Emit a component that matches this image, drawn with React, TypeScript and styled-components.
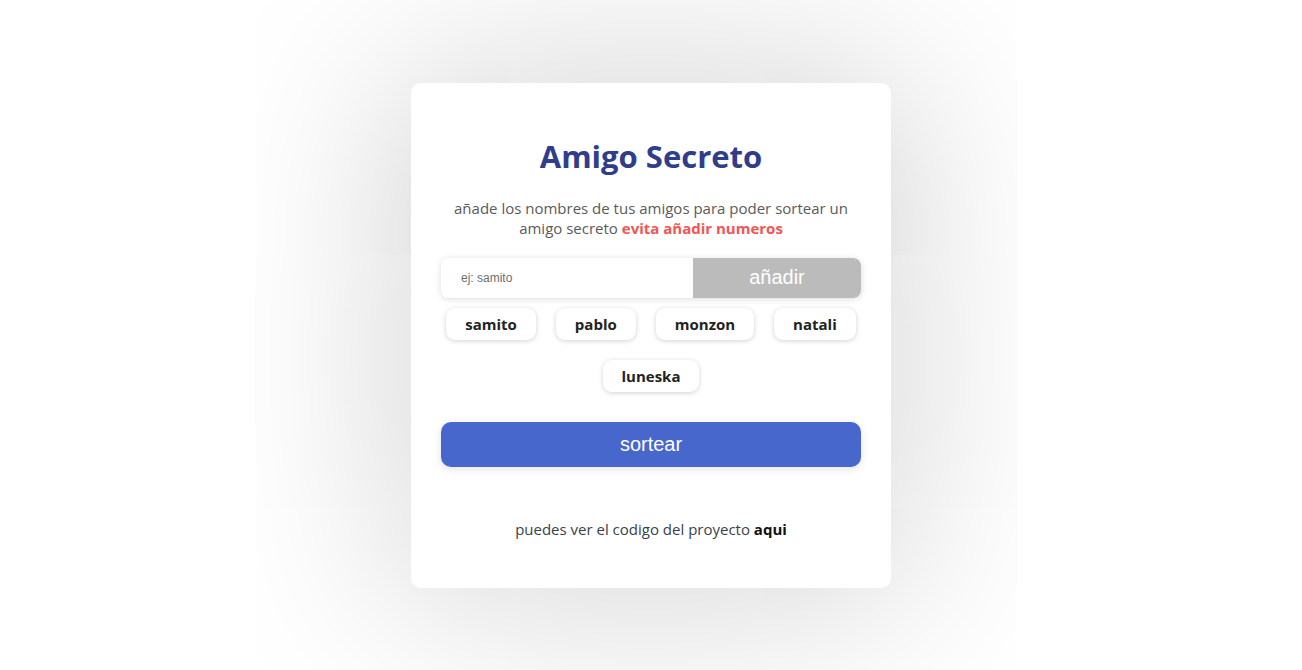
import React from "react";
import styled, { createGlobalStyle } from "styled-components";

const Global = createGlobalStyle`
  html, body { margin: 0; padding: 0; background: #ffffff; }
  body { font-family: "Open Sans", "Noto Sans", sans-serif; }
  * { box-sizing: border-box; }
`;

const Page = styled.div`
  width: 100%;
  height: 670px;
  display: flex;
  align-items: center;
  justify-content: center;
`;

const Card = styled.div`
  width: 480px;
  height: 505px;
  background: #ffffff;
  border-radius: 10px;
  box-shadow: 0 0 200px rgba(0, 0, 0, 0.22);
  padding: 49px 30px 0;
  display: flex;
  flex-direction: column;
  align-items: center;
`;

const Title = styled.h1`
  margin: 0;
  font-size: 31px;
  font-weight: 700;
  color: #2f3d8c;
  line-height: 48px;
`;

const Subtitle = styled.p`
  margin: 18px 0 0;
  font-size: 15px;
  line-height: 20px;
  color: #5a5a5a;
  text-align: center;
`;

const Warn = styled.strong`
  color: #f35454;
  font-weight: 700;
`;

const InputRow = styled.div`
  margin-top: 20px;
  width: 100%;
  height: 40px;
  display: flex;
  border-radius: 8px;
  overflow: hidden;
  box-shadow: 0 1px 6px rgba(0, 0, 0, 0.15);
`;

const NameInput = styled.input`
  flex: 0 0 60%;
  border: none;
  outline: none;
  background: #ffffff;
  padding: 0 20px;
  font-family: "Liberation Sans", Arial, sans-serif;
  font-size: 12px;
  color: #333;
  &::placeholder { color: #6e6e6e; }
`;

const AddButton = styled.button`
  flex: 1;
  border: none;
  background: #bbbbbb;
  color: #ffffff;
  font-family: "Liberation Sans", Arial, sans-serif;
  font-size: 20px;
`;

const ChipList = styled.ul`
  list-style: none;
  margin: 10px 0 0;
  padding: 0;
  width: 100%;
  display: flex;
  flex-wrap: wrap;
  justify-content: center;
  gap: 20px;
`;

const Chip = styled.li`
  height: 32px;
  padding: 0 19px;
  display: flex;
  align-items: center;
  border-radius: 9px;
  background: #ffffff;
  box-shadow: 0 1px 5px rgba(0, 0, 0, 0.18);
  font-size: 15px;
  font-weight: 700;
  color: #222;
`;

const DrawButton = styled.button`
  margin-top: 30px;
  width: 100%;
  height: 45px;
  border: none;
  border-radius: 10px;
  background: #4767cc;
  color: #ffffff;
  font-family: "Liberation Sans", Arial, sans-serif;
  font-size: 20px;
  box-shadow: 0 2px 8px rgba(0, 0, 0, 0.12);
`;

const Footer = styled.p`
  margin: 52px 0 0;
  font-size: 15px;
  color: #3a3f4a;
`;

const Link = styled.a`
  color: #111;
  font-weight: 700;
  text-decoration: none;
`;

const names = ["samito", "pablo", "monzon", "natali", "luneska"];

export default function App() {
  return (
    <>
      <Global />
      <Page>
        <Card>
          <Title>Amigo Secreto</Title>
          <Subtitle>
            añade los nombres de tus amigos para poder sortear un amigo secreto{" "}
            <Warn>evita añadir numeros</Warn>
          </Subtitle>
          <InputRow>
            <NameInput placeholder="ej: samito" />
            <AddButton>añadir</AddButton>
          </InputRow>
          <ChipList>
            {names.map((n) => (
              <Chip key={n}>{n}</Chip>
            ))}
          </ChipList>
          <DrawButton>sortear</DrawButton>
          <Footer>
            puedes ver el codigo del proyecto <Link href="#">aqui</Link>
          </Footer>
        </Card>
      </Page>
    </>
  );
}
